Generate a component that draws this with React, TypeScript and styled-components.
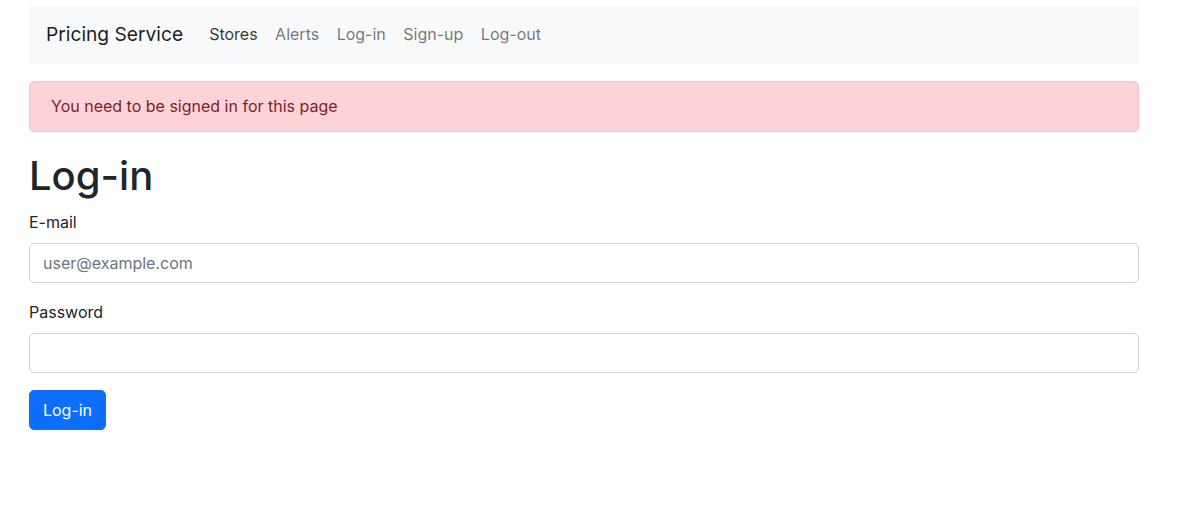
import React from "react";
import styled, { createGlobalStyle } from "styled-components";

const Global = createGlobalStyle`
  html, body { margin: 0; padding: 0; background: #fff; }
  body {
    font-family: Inter, "Noto Sans", "Liberation Sans", sans-serif;
    color: #212529;
    font-size: 16px;
    line-height: 1.5;
  }
  * { box-sizing: border-box; }
`;

const Container = styled.div`
  width: 1110px;
  margin-left: 29px;
  padding-top: 5px;
`;

const Navbar = styled.nav`
  height: 59px;
  background: #f8f9fa;
  display: flex;
  align-items: center;
  padding: 0 17px 2px;
`;

const Brand = styled.a`
  font-size: 19.2px;
  color: rgba(0, 0, 0, 0.9);
  text-decoration: none;
  margin-right: 17.25px;
  line-height: 30px;
`;

const NavList = styled.div`
  display: flex;
  align-items: center;
`;

const NavLink = styled.a<{ $active?: boolean }>`
  font-size: 16px;
  padding: 0 8.75px;
  color: ${(p) => (p.$active ? "rgba(0,0,0,0.8)" : "rgba(0,0,0,0.55)")};
  text-decoration: none;
`;

const Alert = styled.div`
  margin-top: 17px;
  height: 51px;
  display: flex;
  align-items: center;
  padding: 0 21px 1px;
  background: #fdd3d8;
  border: 1px solid #f8c2c8;
  border-radius: 5px;
  color: #7f1d2a;
  font-size: 16px;
`;

const Title = styled.h1`
  margin: 20px 0 0;
  font-size: 40px;
  font-weight: 500;
  line-height: 48px;
  color: #212529;
`;

const Field = styled.div<{ $gap: number }>`
  display: flex;
  flex-direction: column;
  padding-top: ${(p) => p.$gap}px;
`;

const Label = styled.label`
  font-size: 16px;
  line-height: 24px;
  margin-bottom: 9px;
`;

const Input = styled.input`
  height: 40px;
  width: 100%;
  border: 1px solid #ced4da;
  border-radius: 5px;
  padding: 0 13px;
  font-size: 16px;
  font-family: inherit;
  color: #212529;
  &::placeholder { color: #6c757d; }
`;

const Button = styled.button`
  margin-top: 17px;
  height: 40px;
  width: 77px;
  background: #0d6efd;
  border: 1px solid #0d6efd;
  border-radius: 5px;
  color: #fff;
  font-size: 16px;
  font-family: inherit;
  padding: 0;
`;

export default function App() {
  return (
    <>
      <Global />
      <Container>
        <Navbar>
          <Brand href="#">Pricing Service</Brand>
          <NavList>
            <NavLink $active href="#">Stores</NavLink>
            <NavLink href="#">Alerts</NavLink>
            <NavLink href="#">Log-in</NavLink>
            <NavLink href="#">Sign-up</NavLink>
            <NavLink href="#">Log-out</NavLink>
          </NavList>
        </Navbar>
        <Alert>You need to be signed in for this page</Alert>
        <Title>Log-in</Title>
        <Field $gap={10}>
          <Label>E-mail</Label>
          <Input placeholder="user@example.com" />
        </Field>
        <Field $gap={17}>
          <Label>Password</Label>
          <Input type="password" />
        </Field>
        <Button>Log-in</Button>
      </Container>
    </>
  );
}
